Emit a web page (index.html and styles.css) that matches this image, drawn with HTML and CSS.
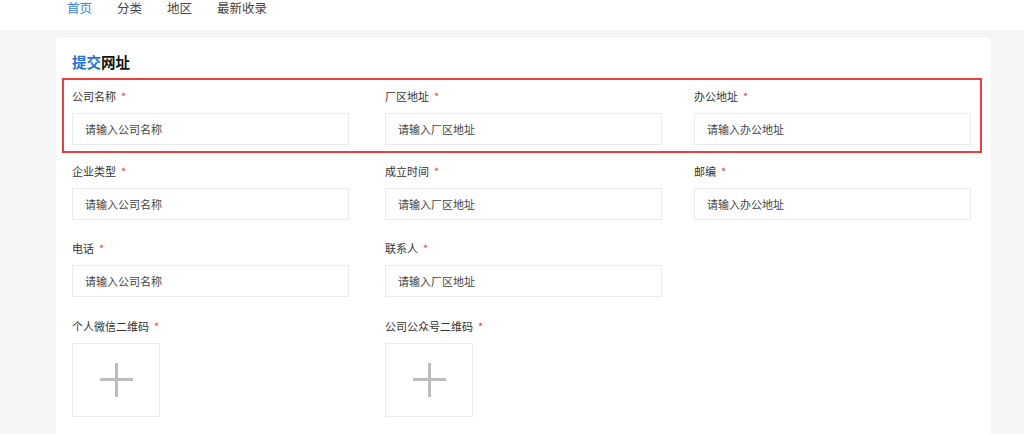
FILE: index.html
```html
<!DOCTYPE html>
<html lang="zh-CN">
<head>
<meta charset="utf-8">
<title>提交网址</title>
<link rel="stylesheet" href="styles.css">
</head>
<body>
<nav class="nav">
  <a class="nav-item active">首页</a>
  <a class="nav-item">分类</a>
  <a class="nav-item">地区</a>
  <a class="nav-item">最新收录</a>
</nav>
<main class="main">
  <section class="card">
    <h2 class="title"><span class="title-blue">提交</span>网址</h2>
    <div class="row row-first">
      <div class="field"><label class="label">公司名称<span class="req">*</span></label><div class="input">请输入公司名称</div></div>
      <div class="field"><label class="label">厂区地址<span class="req">*</span></label><div class="input">请输入厂区地址</div></div>
      <div class="field"><label class="label">办公地址<span class="req">*</span></label><div class="input">请输入办公地址</div></div>
    </div>
    <div class="row">
      <div class="field"><label class="label">企业类型<span class="req">*</span></label><div class="input">请输入公司名称</div></div>
      <div class="field"><label class="label">成立时间<span class="req">*</span></label><div class="input">请输入厂区地址</div></div>
      <div class="field"><label class="label">邮编<span class="req">*</span></label><div class="input">请输入办公地址</div></div>
    </div>
    <div class="row">
      <div class="field"><label class="label">电话<span class="req">*</span></label><div class="input">请输入公司名称</div></div>
      <div class="field"><label class="label">联系人<span class="req">*</span></label><div class="input">请输入厂区地址</div></div>
    </div>
    <div class="row row-upload">
      <div class="field"><label class="label">个人微信二维码<span class="req">*</span></label><div class="upload"><span class="plus"></span></div></div>
      <div class="field"><label class="label">公司公众号二维码<span class="req">*</span></label><div class="upload"><span class="plus"></span></div></div>
    </div>
  </section>
</main>
</body>
</html>
```
FILE: styles.css
```css
* { box-sizing: border-box; }
html, body { margin: 0; padding: 0; }
body {
  font-family: "Noto Sans CJK SC", "Noto Sans", sans-serif;
  background: #f5f5f5;
  color: #333;
  height: 434px;
  overflow: hidden;
}
.nav {
  height: 30px;
  background: #fff;
  display: flex;
  gap: 25px;
  padding-left: 67px;
  align-items: flex-start;
}
.nav-item {
  font-size: 12.5px;
  line-height: 15px;
  color: #444;
  cursor: pointer;
}
.nav-item.active { color: #3a7fe0; }
.main {
  padding: 8px 33px 0 56px;
}
.card {
  background: #fff;
  border-radius: 4px;
  padding: 16px 9px 12px 6px;
}
.title {
  margin: 0 0 8px;
  padding-left: 10px;
  font-size: 14.5px;
  line-height: 16px;
  font-weight: 700;
  color: #111;
}
.title-blue { color: #1d6fde; }
.row {
  display: grid;
  grid-template-columns: 313px 309px 278px;
  border: 2px solid transparent;
  padding: 8px 8px 8px;
}
.row-first {
  border-color: #f03c3c;
  padding-bottom: 6px;
}
.row-upload { padding-top: 9px; }
.label {
  display: block;
  font-size: 11px;
  line-height: 16px;
  color: #333;
  margin-bottom: 9px;
}
.req {
  color: #f0413f;
  margin-left: 5px;
  font-size: 11px;
}
.input {
  width: 277px;
  height: 32px;
  border: 1px solid #ebebeb;
  font-size: 11px;
  line-height: 30px;
  padding-left: 12px;
  color: #444;
}
.upload {
  width: 88px;
  height: 74px;
  border: 1px solid #ececec;
  display: flex;
  align-items: center;
  justify-content: center;
}
.plus {
  position: relative;
  width: 33px;
  height: 34px;
}
.plus::before, .plus::after {
  content: "";
  position: absolute;
  background: #bdbdbd;
}
.plus::before {
  left: 0; right: 0;
  top: 15px; height: 3px;
}
.plus::after {
  top: 0; bottom: 0;
  left: 15px; width: 3px;
}
```
